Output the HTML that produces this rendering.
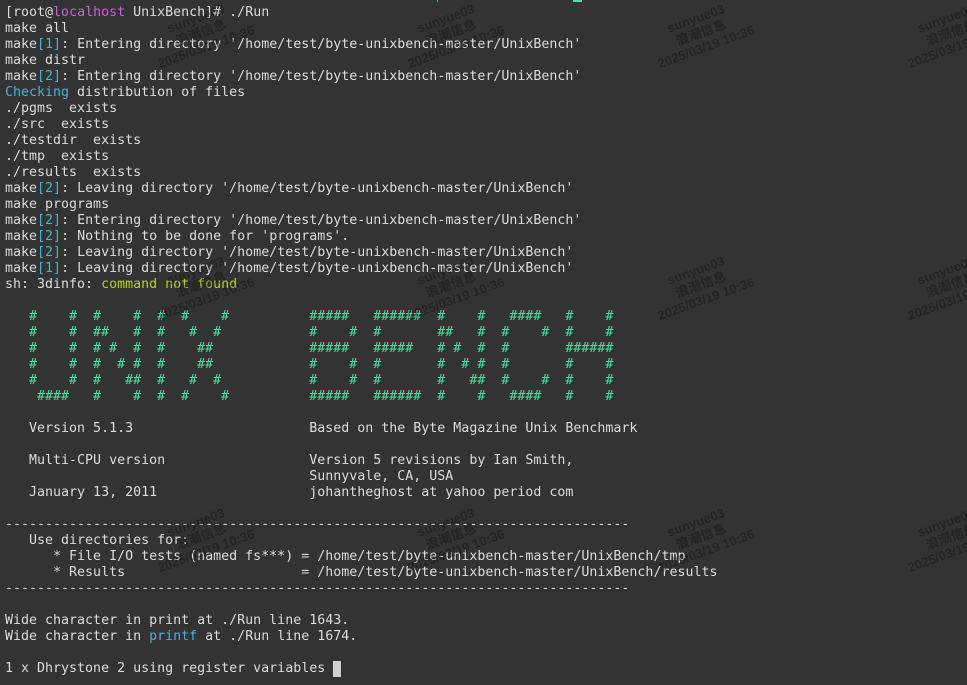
<!DOCTYPE html>
<html><head><meta charset="utf-8"><style>
html,body{margin:0;padding:0;background:#333333;width:967px;height:685px;overflow:hidden}
pre{position:absolute;left:5px;top:5px;margin:0;font-family:"DejaVu Sans Mono","Liberation Mono",monospace;font-size:13.3px;line-height:16px;color:#dcdcdc;white-space:pre}
.c{color:#45b3d6}.m{color:#d35cd8}.g{color:#3de8a0}.y{color:#b9d21e}
.cur{display:inline-block;width:8px;height:16px;background:#d0d0d0;vertical-align:top}
.wm{position:absolute;font-family:"Liberation Sans","Noto Sans CJK SC",sans-serif;font-weight:bold;font-size:13px;line-height:15px;color:rgba(10,10,10,0.35);transform:rotate(-20deg);text-align:center;white-space:nowrap}
</style></head><body>
<div style="position:absolute;left:573px;top:0;width:9px;height:2px;background:#3de8a0"></div>
<div style="position:absolute;left:437px;top:0;width:1px;height:2px;background:#45b3d6"></div>
<pre>[root@<span class="m">localhost</span> UnixBench]# ./Run
make all
make<span class="c">[1]</span>: Entering directory '/home/test/byte-unixbench-master/UnixBench'
make distr
make<span class="c">[2]</span>: Entering directory '/home/test/byte-unixbench-master/UnixBench'
<span class="c">Checking</span> distribution of files
./pgms  exists
./src  exists
./testdir  exists
./tmp  exists
./results  exists
make<span class="c">[2]</span>: Leaving directory '/home/test/byte-unixbench-master/UnixBench'
make programs
make<span class="c">[2]</span>: Entering directory '/home/test/byte-unixbench-master/UnixBench'
make<span class="c">[2]</span>: Nothing to be done for 'programs'.
make<span class="c">[2]</span>: Leaving directory '/home/test/byte-unixbench-master/UnixBench'
make<span class="c">[1]</span>: Leaving directory '/home/test/byte-unixbench-master/UnixBench'
sh: 3dinfo: <span class="y">command not found</span>

<span class="g">   #    #  #    #  #  #    #          #####   ######  #    #   ####   #    #
   #    #  ##   #  #   #  #           #    #  #       ##   #  #    #  #    #
   #    #  # #  #  #    ##            #####   #####   # #  #  #       ######
   #    #  #  # #  #    ##            #    #  #       #  # #  #       #    #
   #    #  #   ##  #   #  #           #    #  #       #   ##  #    #  #    #
    ####   #    #  #  #    #          #####   ######  #    #   ####   #    #</span>

   Version 5.1.3                      Based on the Byte Magazine Unix Benchmark

   Multi-CPU version                  Version 5 revisions by Ian Smith,
                                      Sunnyvale, CA, USA
   January 13, 2011                   johantheghost at yahoo period com

------------------------------------------------------------------------------
   Use directories for:
      * File I/O tests (named fs***) = /home/test/byte-unixbench-master/UnixBench/tmp
      * Results                      = /home/test/byte-unixbench-master/UnixBench/results
------------------------------------------------------------------------------

Wide character in print at ./Run line 1643.
Wide character in <span class="c">printf</span> at ./Run line 1674.

1 x Dhrystone 2 using register variables <span class="cur"></span></pre>
<div class="wm" style="left:150px;top:10px">sunyue03<br>浪潮信息<br>2025/03/19 10:36</div>
<div class="wm" style="left:400px;top:10px">sunyue03<br>浪潮信息<br>2025/03/19 10:36</div>
<div class="wm" style="left:650px;top:10px">sunyue03<br>浪潮信息<br>2025/03/19 10:36</div>
<div class="wm" style="left:900px;top:10px">sunyue03<br>浪潮信息<br>2025/03/19 10:36</div>
<div class="wm" style="left:150px;top:262px">sunyue03<br>浪潮信息<br>2025/03/19 10:36</div>
<div class="wm" style="left:400px;top:262px">sunyue03<br>浪潮信息<br>2025/03/19 10:36</div>
<div class="wm" style="left:650px;top:262px">sunyue03<br>浪潮信息<br>2025/03/19 10:36</div>
<div class="wm" style="left:900px;top:262px">sunyue03<br>浪潮信息<br>2025/03/19 10:36</div>
<div class="wm" style="left:150px;top:514px">sunyue03<br>浪潮信息<br>2025/03/19 10:36</div>
<div class="wm" style="left:400px;top:514px">sunyue03<br>浪潮信息<br>2025/03/19 10:36</div>
<div class="wm" style="left:650px;top:514px">sunyue03<br>浪潮信息<br>2025/03/19 10:36</div>
<div class="wm" style="left:900px;top:514px">sunyue03<br>浪潮信息<br>2025/03/19 10:36</div>
</body></html>
